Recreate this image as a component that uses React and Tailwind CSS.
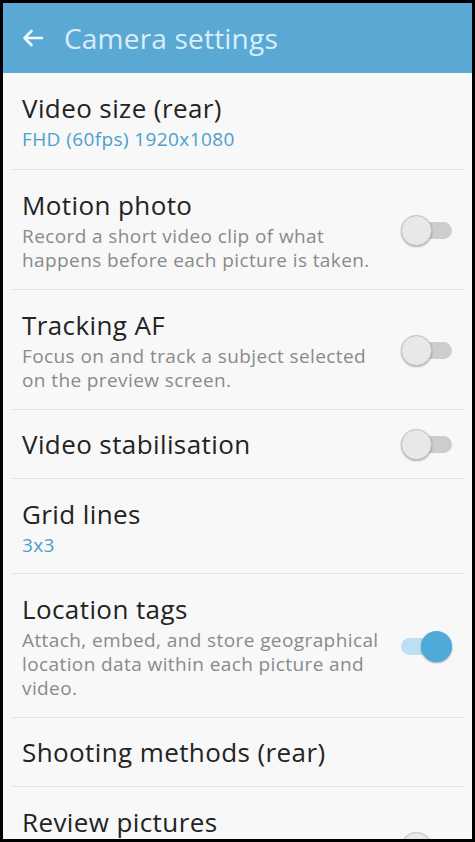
import React from 'react';

const rows = [
  { title: 'Video size (rear)', value: 'FHD (60fps) 1920x1080', pad: 'pt-[19px] pb-[18px]' },
  { title: 'Motion photo', desc: ['Record a short video clip of what', 'happens before each picture is taken.'], toggle: false },
  { title: 'Tracking AF', desc: ['Focus on and track a subject selected', 'on the preview screen.'], toggle: false },
  { title: 'Video stabilisation', toggle: false },
  { title: 'Grid lines', value: '3x3', pad: 'pt-[19px] pb-[16px]' },
  { title: 'Location tags', desc: ['Attach, embed, and store geographical', 'location data within each picture and', 'video.'], toggle: true },
  { title: 'Shooting methods (rear)' },
  { title: 'Review pictures', desc: ['View pictures immediately after', 'taking them.'], toggle: false },
];

function Toggle({ on }) {
  if (on) {
    return (
      <div className="relative w-[51px] h-[31px] shrink-0">
        <div className="absolute left-0 right-[6px] top-[7px] h-[17px] rounded-full bg-[#bcdff1]" />
        <div className="absolute right-0 top-0 w-[31px] h-[31px] rounded-full bg-[#4fa9d9] shadow-[0_1px_2px_rgba(0,0,0,0.35)]" />
      </div>
    );
  }
  return (
    <div className="relative w-[51px] h-[31px] shrink-0">
      <div className="absolute left-[6px] right-0 top-[7px] h-[17px] rounded-full bg-[#cdcdcd]" />
      <div className="absolute left-0 top-0 w-[31px] h-[31px] rounded-full bg-[#e8e8e8] border border-[#c2c2c2] shadow-[0_1px_2px_rgba(0,0,0,0.3)]" />
    </div>
  );
}

export default function App() {
  return (
    <div className="w-[475px] h-[842px] bg-black p-[3px] overflow-hidden" style={{ fontFamily: '"Open Sans", "Noto Sans", sans-serif' }}>
      <div className="w-full h-full bg-[#f8f8f8] overflow-hidden flex flex-col">
        {/* Header */}
        <div className="h-[70px] shrink-0 bg-[#5aa9d5] flex items-center pl-[19px]">
          <svg width="22" height="18" viewBox="0 0 22 18" fill="none" stroke="#f2f9fd" strokeWidth="2.6" strokeLinecap="round" strokeLinejoin="round">
            <path d="M20 9H2.5M9.5 2L2.5 9l7 7" />
          </svg>
          <span className="ml-[20px] text-[28px] leading-none tracking-[0.2px] text-[#d9eef8]">Camera settings</span>
        </div>

        {/* List */}
        <div className="flex flex-col">
          {rows.map((row, i) => (
            <div key={row.title}>
              {i > 0 && <div className="mx-[9px] h-px bg-[#e2e2e2]" />}
              <div className={`flex items-center pl-[19px] pr-[20px] ${row.pad ? row.pad : row.desc ? 'pt-[19px] pb-[17px]' : 'py-[18px]'}`}>
                <div className="flex-1 min-w-0">
                  <div className="text-[26px] leading-[32px] tracking-[0.4px] text-[#232323]">{row.title}</div>
                  {row.value && (
                    <div className="mt-[3px] text-[19px] leading-[24px] tracking-[0.4px] text-[#4a9fcf]">{row.value}</div>
                  )}
                  {row.desc && (
                    <div className="mt-[3px] text-[19px] leading-[24px] tracking-[0.4px] text-[#8a8a8a]">
                      {row.desc.map((d) => (
                        <div key={d} className="whitespace-nowrap">{d}</div>
                      ))}
                    </div>
                  )}
                </div>
                {row.toggle !== undefined && (
                  <div className="ml-2">
                    <Toggle on={row.toggle} />
                  </div>
                )}
              </div>
            </div>
          ))}
        </div>
      </div>
    </div>
  );
}
